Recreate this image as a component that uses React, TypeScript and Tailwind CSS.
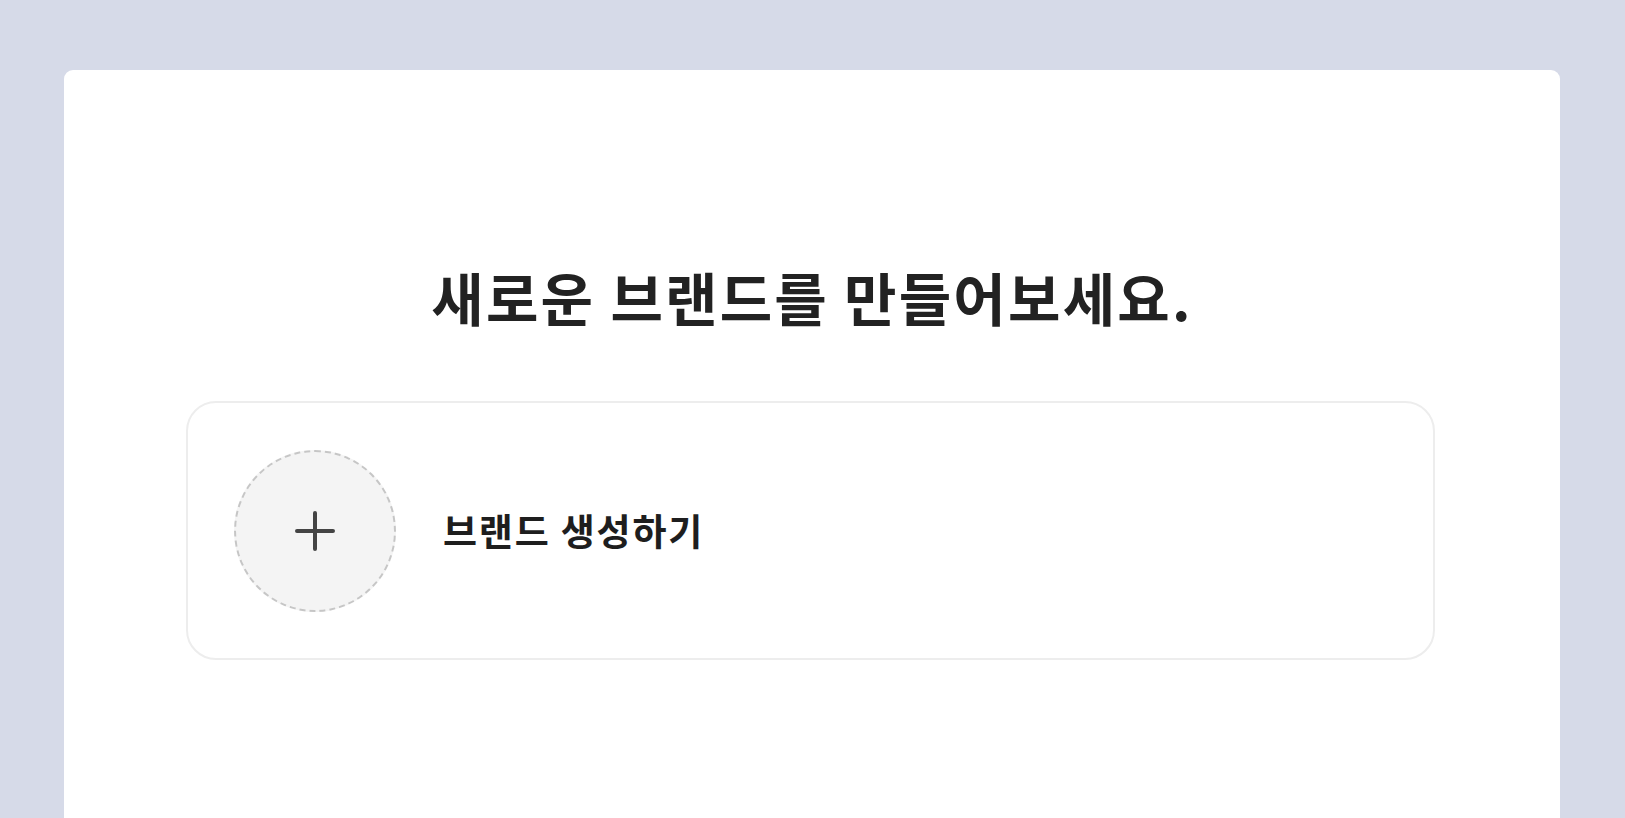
export default function App() {
  return (
    <div className="w-full h-[818px] overflow-hidden bg-[#d6dae8] pl-[64px] pr-[65px] pt-[70px]" style={{ fontFamily: '"Noto Sans CJK KR", "Noto Sans", sans-serif' }}>
      <div className="bg-white rounded-t-[9px] h-[760px] flex flex-col items-center pt-[190px]">
        <h1 className="text-[57px] leading-[72px] font-semibold text-[#222222] tracking-[2.2px]">새로운 브랜드를 만들어보세요.</h1>
        <button className="mt-[69px] mr-[3px] w-[1249px] h-[259px] rounded-[30px] border-2 border-[#ededed] flex items-center pl-[46px] text-left">
          <div className="w-[162px] h-[162px] rounded-full border-2 border-dashed border-[#c6c6c6] bg-[#f4f4f4] flex items-center justify-center shrink-0">
            <svg width="40" height="40" viewBox="0 0 40 40" fill="none">
              <path d="M20 2v36M2 20h36" stroke="#444" strokeWidth="4" strokeLinecap="round" />
            </svg>
          </div>
          <span className="ml-[47px] text-[37px] font-semibold text-[#1e1e1e] tracking-[1.8px]">브랜드 생성하기</span>
        </button>
      </div>
    </div>
  );
}
